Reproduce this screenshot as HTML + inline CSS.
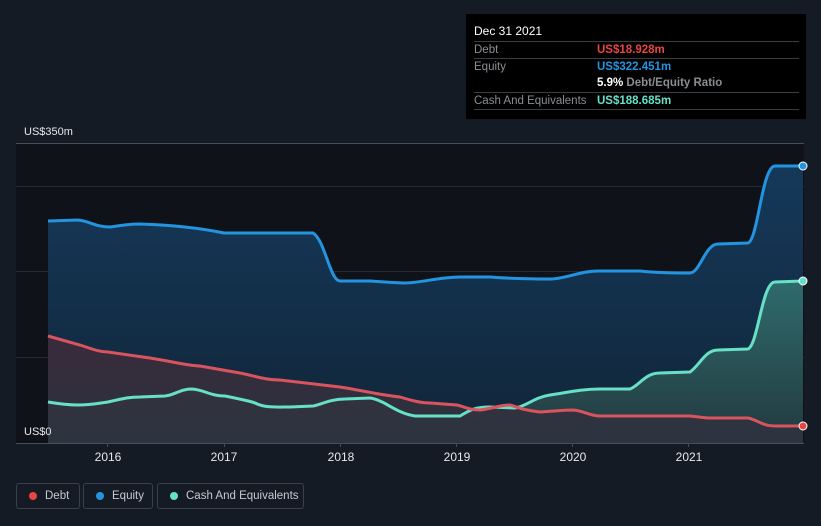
<!DOCTYPE html>
<html><head><meta charset="utf-8"><style>
html,body{margin:0;padding:0;background:#151b24;width:821px;height:526px;overflow:hidden;font-family:"Liberation Sans",sans-serif}
.tt{position:absolute;left:466px;top:14px;width:340px;height:105px;background:#000;}
.tt .h{position:absolute;left:8px;top:10px;color:#fff;font-size:12px}
.tt .r{position:absolute;left:8px;width:325px;height:17px;border-top:1px solid #3a3d42;font-size:11.5px;color:#8a8d92;white-space:nowrap}
.tt .r span{position:absolute;left:123px;top:2px;font-weight:bold}
.tt .r i{font-style:normal;position:absolute;left:0;top:2px}
.lg{position:absolute;top:483px;height:26px;border:1px solid #3a404a;border-radius:3px;color:#c6c9ce;font-size:11.5px;line-height:24px;box-sizing:border-box;white-space:nowrap}
.lg b{position:absolute;left:12px;top:8px;width:8px;height:8px;border-radius:50%}
</style></head><body>
<svg width="821" height="526" style="position:absolute;left:0;top:0">
<defs>
<linearGradient id="ge" x1="0" y1="0" x2="0" y2="1"><stop offset="0" stop-color="#15395a"/><stop offset="1" stop-color="#112538"/></linearGradient>
<linearGradient id="gc" x1="0" y1="0" x2="0" y2="1"><stop offset="0" stop-color="#2f6b6c"/><stop offset="1" stop-color="#22393f"/></linearGradient>
<linearGradient id="gd" x1="0" y1="0" x2="0" y2="1"><stop offset="0" stop-color="#3e2a3a"/><stop offset="1" stop-color="#2c343f"/></linearGradient>
</defs>
<rect x="16" y="143" width="788" height="300" fill="#0f1319"/>
<g stroke="#262b33" stroke-width="1">
<line x1="16" y1="143.5" x2="804" y2="143.5" stroke="#4a4f57"/>
<line x1="16" y1="186.5" x2="804" y2="186.5"/>
<line x1="16" y1="271.5" x2="804" y2="271.5"/>
<line x1="16" y1="357.5" x2="804" y2="357.5"/>
</g>
<path d="M48,221 L78,220 C90,221 95,227 110,227 C120,226 125,224 140,224 C170,225 200,228 224,233 L313,233 C325,240 330,281 340,281 L370,281 C385,282 395,283 405,283 C420,283 440,277 460,277 L490,277 C505,278 515,279 550,279 C565,279 580,271 598,271 L640,271 C650,272 660,273 690,273 C700,273 705,244 718,244 L748,243 C758,240 762,166 775,166 L803,166 L803,443 L48,443 Z" fill="url(#ge)"/>
<path d="M48,402 C60,404 70,405 78,405 C90,405 100,403 108,402 C125,398 130,397 140,397 L165,396 C175,395 180,389 192,389 C205,390 210,396 225,396 C240,399 250,401 255,403 C265,408 275,407 290,407 L313,406 C320,405 330,399 345,399 L370,398 C385,400 395,413 415,416 L460,416 C470,410 475,407 490,407 L515,408 C525,407 535,397 550,395 C565,393 580,389 600,389 L630,389 C640,385 645,373 660,373 L690,372 C700,365 705,350 718,350 L748,349 C758,345 762,282 775,282 L803,281 L803,443 L48,443 Z" fill="url(#gc)"/>
<path d="M48,336 L80,345 C95,350 100,352 108,352 L150,358 C175,362 190,366 200,366 L240,373 C255,376 265,380 280,380 L340,387 C360,390 380,395 400,397 C410,400 420,403 430,403 L457,405 C465,407 470,410 480,410 C490,409 500,405 510,405 C515,406 520,410 540,412 C555,411 565,410 573,410 C585,411 590,416 600,416 L690,416 C700,417 705,418 710,418 L748,418 C758,420 762,426 775,426 L803,426 L803,443 L48,443 Z" fill="url(#gd)" opacity="0.9"/>
<path d="M48,221 L78,220 C90,221 95,227 110,227 C120,226 125,224 140,224 C170,225 200,228 224,233 L313,233 C325,240 330,281 340,281 L370,281 C385,282 395,283 405,283 C420,283 440,277 460,277 L490,277 C505,278 515,279 550,279 C565,279 580,271 598,271 L640,271 C650,272 660,273 690,273 C700,273 705,244 718,244 L748,243 C758,240 762,166 775,166 L803,166" fill="none" stroke="#2394e0" stroke-width="3"/>
<path d="M48,402 C60,404 70,405 78,405 C90,405 100,403 108,402 C125,398 130,397 140,397 L165,396 C175,395 180,389 192,389 C205,390 210,396 225,396 C240,399 250,401 255,403 C265,408 275,407 290,407 L313,406 C320,405 330,399 345,399 L370,398 C385,400 395,413 415,416 L460,416 C470,410 475,407 490,407 L515,408 C525,407 535,397 550,395 C565,393 580,389 600,389 L630,389 C640,385 645,373 660,373 L690,372 C700,365 705,350 718,350 L748,349 C758,345 762,282 775,282 L803,281" fill="none" stroke="#67e0c8" stroke-width="3"/>
<path d="M48,336 L80,345 C95,350 100,352 108,352 L150,358 C175,362 190,366 200,366 L240,373 C255,376 265,380 280,380 L340,387 C360,390 380,395 400,397 C410,400 420,403 430,403 L457,405 C465,407 470,410 480,410 C490,409 500,405 510,405 C515,406 520,410 540,412 C555,411 565,410 573,410 C585,411 590,416 600,416 L690,416 C700,417 705,418 710,418 L748,418 C758,420 762,426 775,426 L803,426" fill="none" stroke="#d9545e" stroke-width="3"/>
<circle cx="803" cy="166" r="4" fill="#2394e0" stroke="#fff" stroke-width="1"/>
<circle cx="803" cy="281" r="4" fill="#67e0c8" stroke="#fff" stroke-width="1"/>
<circle cx="803" cy="426" r="4" fill="#e84545" stroke="#fff" stroke-width="1"/>
<line x1="16" y1="443.5" x2="804" y2="443.5" stroke="#4a4f57"/>
<g stroke="#4a4f57"><line x1="107.5" y1="443" x2="107.5" y2="447"/><line x1="224.5" y1="443" x2="224.5" y2="447"/><line x1="340.5" y1="443" x2="340.5" y2="447"/><line x1="456.5" y1="443" x2="456.5" y2="447"/><line x1="572.5" y1="443" x2="572.5" y2="447"/><line x1="688.5" y1="443" x2="688.5" y2="447"/></g>
<g fill="#e6e8eb" font-size="12" font-family="Liberation Sans,sans-serif" text-anchor="middle">
<text x="108" y="461">2016</text><text x="224" y="461">2017</text><text x="341" y="461">2018</text><text x="457" y="461">2019</text><text x="573" y="461">2020</text><text x="689" y="461">2021</text>
</g>
<text x="24" y="135" fill="#e6e8eb" font-size="11">US$350m</text>
<text x="24" y="435" fill="#e6e8eb" font-size="11">US$0</text>
</svg>
<div class="tt">
<div class="h">Dec 31 2021</div>
<div class="r" style="top:27px"><i>Debt</i><span style="color:#e84545">US$18.928m</span></div>
<div class="r" style="top:44px"><i>Equity</i><span style="color:#2394e0">US$322.451m</span></div>
<div class="r" style="top:61px;border-top:none"><span style="color:#fff">5.9% <b style="color:#8a8d92">Debt/Equity Ratio</b></span></div>
<div class="r" style="top:78px"><i>Cash And Equivalents</i><span style="color:#67e0c8">US$188.685m</span></div>
<div class="r" style="top:95px;height:0"></div>
</div>
<div class="lg" style="left:16px;width:64px"><b style="background:#e84545"></b><span style="position:absolute;left:28px">Debt</span></div>
<div class="lg" style="left:83px;width:70px"><b style="background:#2394e0"></b><span style="position:absolute;left:28px">Equity</span></div>
<div class="lg" style="left:157px;width:147px"><b style="background:#67e0c8"></b><span style="position:absolute;left:28px">Cash And Equivalents</span></div>
</body></html>
